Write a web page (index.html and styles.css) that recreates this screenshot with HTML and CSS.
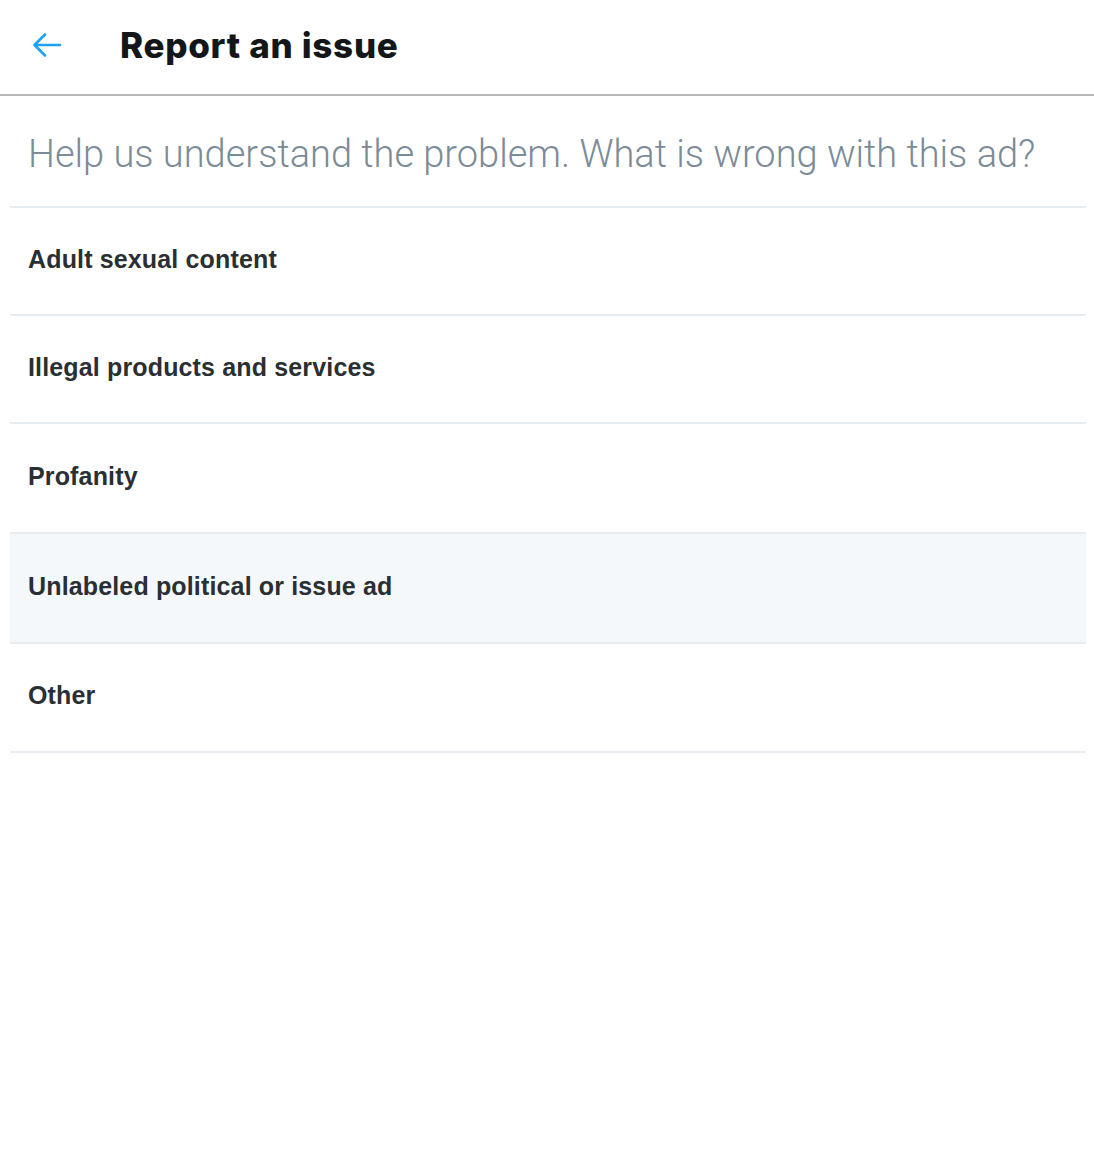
FILE: index.html
```html
<!DOCTYPE html>
<html>
<head>
<meta charset="utf-8">
<link rel="stylesheet" href="styles.css">
</head>
<body>
<header class="header">
  <button class="back" aria-label="Back">
    <svg viewBox="0 0 30 26" width="30" height="26">
      <path d="M28 13H3M13 2.5L2.5 13L13 23.5" fill="none" stroke="#1da1f2" stroke-width="2.6" stroke-linecap="round" stroke-linejoin="round"/>
    </svg>
  </button>
  <h1 class="title">Report an issue</h1>
</header>
<main class="content">
  <p class="prompt">Help us understand the problem. What is wrong with this ad?</p>
  <ul class="options">
    <li class="option">Adult sexual content</li>
    <li class="option">Illegal products and services</li>
    <li class="option option-tall">Profanity</li>
    <li class="option option-tall option-hover">Unlabeled political or issue ad</li>
    <li class="option option-last">Other</li>
  </ul>
</main>
</body>
</html>
```
FILE: styles.css
```css
html, body {
  margin: 0;
  padding: 0;
  background: #ffffff;
}
body {
  font-family: "Liberation Sans", Arial, sans-serif;
  color: #14171a;
}
.header {
  height: 94px;
  display: flex;
  align-items: center;
  border-bottom: 2px solid #b8b8b8;
  box-sizing: content-box;
}
.back {
  width: 120px;
  height: 94px;
  border: 0;
  background: transparent;
  padding: 0 0 0 32px;
  display: flex;
  align-items: center;
  margin: 0;
}
.back svg {
  display: block;
  margin-top: -5px;
}
.title {
  margin: 0;
  font-family: Inter, "Liberation Sans", sans-serif;
  font-weight: 800;
  font-size: 35px;
  letter-spacing: 0.7px;
  color: #14171a;
  margin-top: -5px;
}
.content {
  padding: 0 8px 0 10px;
}
.prompt {
  margin: 0;
  height: 112px;
  display: flex;
  align-items: center;
  padding: 6px 0 0 18px;
  font-family: Roboto, "Liberation Sans", sans-serif;
  font-weight: 300;
  font-size: 38px;
  color: #7b8b98;
  border-bottom: 2px solid #e6ecf0;
  box-sizing: border-box;
}
.options {
  list-style: none;
  margin: 0;
  padding: 0;
}
.option {
  height: 108px;
  display: flex;
  align-items: center;
  padding: 0 0 4px 18px;
  font-weight: 700;
  font-size: 25px;
  letter-spacing: 0.15px;
  color: #292f33;
  border-bottom: 2px solid #e6ecf0;
  box-sizing: border-box;
}
.option-tall {
  height: 110px;
}
.option-hover {
  background: #f5f8fa;
}
.option-last {
  height: 109px;
}
```
